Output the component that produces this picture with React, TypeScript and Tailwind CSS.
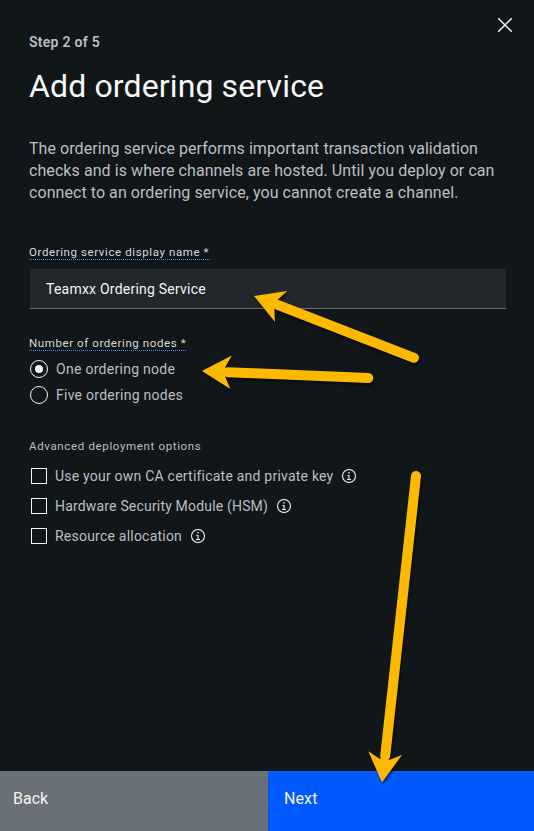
import React from "react";

function InfoIcon() {
  return (
    <svg width="16" height="16" viewBox="0 0 32 32" fill="#f3f3f3" stroke="#f3f3f3" strokeWidth="0.2" className="shrink-0">
      <path d="M17 22v-8h-4v2h2v6h-3v2h8v-2zM16 8a1.5 1.5 0 1 0 1.5 1.5A1.5 1.5 0 0 0 16 8z" />
      <path d="M16 30a14 14 0 1 1 14-14 14 14 0 0 1-14 14zm0-26a12 12 0 1 0 12 12A12 12 0 0 0 16 4z" />
    </svg>
  );
}

function Radio({ label, checked, spacing }: { label: string; checked?: boolean; spacing: string }) {
  return (
    <div className="flex h-[26px] items-center">
      <span className="flex size-[18px] shrink-0 items-center justify-center rounded-full border border-[#f3f3f3]">
        {checked && <span className="size-2 rounded-full bg-[#f3f3f3]" />}
      </span>
      <span className={`ml-2 whitespace-nowrap text-sm ${spacing}`}>{label}</span>
    </div>
  );
}

function Option({ label, spacing, width }: { label: string; spacing: string; width: string }) {
  return (
    <div className="flex h-[30px] items-center pl-px">
      <span className="size-4 shrink-0 border border-[#f3f3f3]" />
      <span className={`ml-2 whitespace-nowrap text-sm ${spacing} ${width}`}>{label}</span>
      <InfoIcon />
    </div>
  );
}

function Arrow({ head, from, to }: { head: string; from: number[]; to: number[] }) {
  return (
    <g>
      <path d={head} />
      <line x1={from[0]} y1={from[1]} x2={to[0]} y2={to[1]} stroke="#fdb900" strokeWidth="10" strokeLinecap="round" />
    </g>
  );
}

export default function App() {
  return (
    <div className="relative flex h-[831px] w-[534px] flex-col overflow-hidden bg-[#111619] font-[Roboto,sans-serif] text-[#b9bfc4]">
      <main className="flex-1 pl-[30px] pr-7">
        <header className="flex h-[66px] justify-between">
          <p className="-ml-px mt-[33px] h-[18px] whitespace-nowrap text-sm leading-[18px] font-semibold tracking-[0.27px]">Step 2 of 5</p>
          <svg width="20" height="20" viewBox="0 0 20 20" className="-mr-[9px] mt-[15px]" stroke="#f3f3f3" strokeWidth="1.5">
            <path d="M3.2 3.2 16.8 16.8M16.8 3.2 3.2 16.8" />
          </svg>
        </header>
        <h1 className="-ml-px h-10 whitespace-nowrap text-[32px] leading-10 text-[#f8f8f8] tracking-[0.13px]">Add ordering service</h1>
        <div className="-ml-px mt-8 whitespace-nowrap text-base leading-[22px]">
          <p className="tracking-[0.065px]">The ordering service performs important transaction validation</p>
          <p className="tracking-[0.075px]">checks and is where channels are hosted. Until you deploy or can</p>
          <p className="tracking-[0.065px]">connect to an ordering service, you cannot create a channel.</p>
        </div>
        <div className="mt-[39px] flex h-[26px] items-start">
          <span className="-ml-px h-[17px] w-[181px] whitespace-nowrap border-b border-dotted border-b-[#4589ff] text-[11.5px] leading-[18px] tracking-[0.6px] text-[#d5d9dc]">Ordering service display name *</span>
        </div>
        <div className="flex h-10 w-[476px] items-center border-b border-[#697077] bg-[#21272a] pl-4 text-sm text-[#f2f4f8] tracking-[0.23px]">
          <span className="whitespace-nowrap">Teamxx Ordering Service</span>
        </div>
        <div className="mt-[25px] flex h-[22px] items-start">
          <span className="-ml-px h-[17px] w-[157px] whitespace-nowrap border-b border-dotted border-b-[#4589ff] text-[11.5px] leading-[18px] tracking-[0.59px] text-[#d5d9dc]">Number of ordering nodes *</span>
        </div>
        <Radio label="One ordering node" checked spacing="tracking-[0.28px]" />
        <Radio label="Five ordering nodes" spacing="tracking-[0.26px]" />
        <p className="-ml-px mt-[29px] mb-[6px] h-[18px] whitespace-nowrap text-[11.5px] leading-[18px] tracking-[0.65px]">Advanced deployment options</p>
        <Option label="Use your own CA certificate and private key" spacing="tracking-[0.22px]" width="w-[286px]" />
        <Option label="Hardware Security Module (HSM)" spacing="tracking-[0.18px]" width="w-[221px]" />
        <Option label="Resource allocation" spacing="tracking-[0.22px]" width="w-[135px]" />
      </main>
      <footer className="flex h-[60px] text-base leading-[55px] text-[#f4f4f4]">
        <div className="w-[268px] bg-[#697077] pl-[13px]">Back</div>
        <div className="flex-1 bg-[#0059ff] pl-4 tracking-[0.1px]">Next</div>
      </footer>
      <svg className="pointer-events-none absolute inset-0 drop-shadow-[1px_2px_1px_rgba(0,0,0,0.6)]" width="534" height="831" viewBox="0 0 534 831" fill="#fdb900">
        <Arrow head="M254 296 287.2 291 277.5 300 274.3 309 275 322z" from={[277, 304.6]} to={[414, 357.8]} />
        <Arrow head="M202 371 231.8 355.6 225.3 367 225.3 377 230.4 389z" from={[228, 372.2]} to={[368.3, 378]} />
        <Arrow head="M382 782.5 368.3 751.2 379.7 758.7 389.7 759.7 402 755z" from={[385.2, 756]} to={[416, 476]} />
      </svg>
    </div>
  );
}
